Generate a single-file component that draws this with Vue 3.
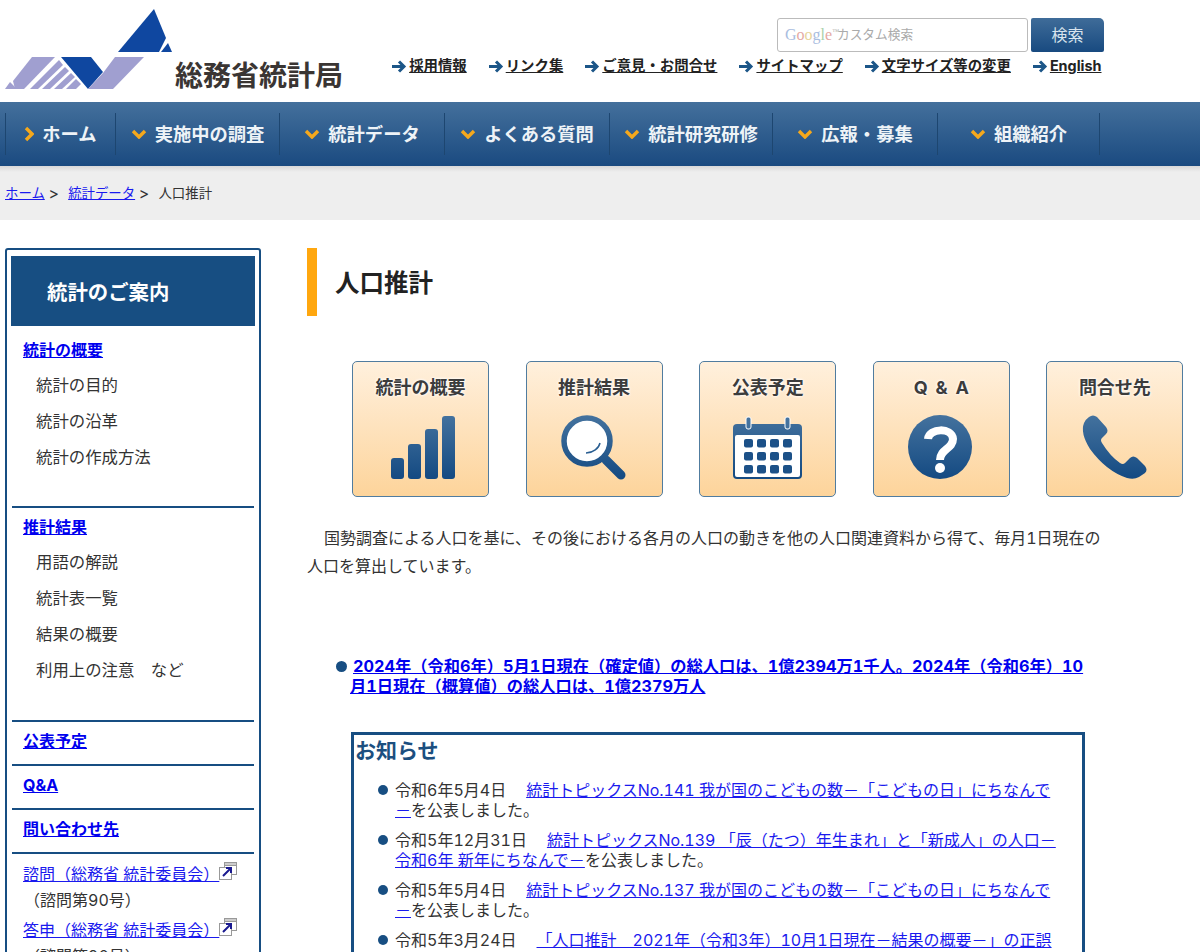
<template>
  <div class="page">
    <header class="head">
      <svg class="logo" viewBox="0 0 175 102" aria-hidden="true">
        <polygon points="154,9 166,38 159,52 118,52" fill="#0f47a0" />
        <polygon points="168,43 172,52 161,52" fill="#0f47a0" />
        <polygon points="61,57 91,57 103,72 88,89" fill="#0f47a0" />
        <polygon points="115,57 144,57 113,89 88,89 103,73" fill="#a09fd0" />
        <polygon points="32,57 55,57 24,89 15,89 13,81" fill="#a09fd0" />
        <polygon points="10,82 17,89 5,89" fill="#a09fd0" />
        <polygon points="59,60 63,65 38,89 30,89" fill="#a09fd0" />
        <polygon points="65,67 69,71 50,89 42,89" fill="#a09fd0" />
        <polygon points="71,73 75,77 62,89 54,89" fill="#a09fd0" />
        <polygon points="76,79 81,84 76,89 66,89" fill="#a09fd0" />
      </svg>
      <div class="bureau">総務省統計局</div>
      <div class="head-right">
        <div class="search">
          <div class="search-box">
            <span class="google"><i class="g1">G</i><i class="g2">o</i><i class="g3">o</i><i class="g1">g</i><i class="g4">l</i><i class="g2">e</i><sup>™</sup></span>
            <span>カスタム検索</span>
          </div>
          <button class="search-btn">検索</button>
        </div>
        <div class="util">
          <a v-for="u in utilLinks" :key="u" class="util-link">
            <svg viewBox="0 0 15 13" width="15" height="13"><path d="M0 6.500h11M7 1.500l5 5-5 5" fill="none" stroke="#1c5688" stroke-width="3" /></svg>
            <span>{{ u }}</span>
          </a>
        </div>
      </div>
    </header>

    <nav class="gnav">
      <div v-for="(n, i) in navItems" :key="n.label" class="gnav-item" :style="{ width: n.w + 'px' }">
        <svg v-if="i === 0" viewBox="0 0 10 16" width="10" height="16"><path d="M2 2l6 6-6 6" fill="none" stroke="#f5a81c" stroke-width="3.400" /></svg>
        <svg v-else viewBox="0 0 16 10" width="16" height="10"><path d="M2 2l6 6 6-6" fill="none" stroke="#f5a81c" stroke-width="3.400" /></svg>
        <span>{{ n.label }}</span>
      </div>
    </nav>

    <div class="crumbs">
      <a class="link">ホーム</a><span class="sep">&gt;</span>
      <a class="link">統計データ</a><span class="sep">&gt;</span>
      <span>人口推計</span>
    </div>

    <div class="body">
      <aside class="side">
        <div class="side-head">統計のご案内</div>
        <section class="side-sec first">
          <a class="side-title">統計の概要</a>
          <ul class="side-list">
            <li>統計の目的</li>
            <li>統計の沿革</li>
            <li>統計の作成方法</li>
          </ul>
        </section>
        <section class="side-sec second">
          <a class="side-title">推計結果</a>
          <ul class="side-list">
            <li>用語の解説</li>
            <li>統計表一覧</li>
            <li>結果の概要</li>
            <li>利用上の注意　など</li>
          </ul>
        </section>
        <section class="side-sec plain"><a class="side-title">公表予定</a></section>
        <section class="side-sec plain"><a class="side-title">Q&amp;A</a></section>
        <section class="side-sec plain"><a class="side-title">問い合わせ先</a></section>
        <section class="side-sec ext">
          <div class="ext-row">
            <a class="link">諮問（総務省 統計委員会）</a>
            <svg class="ext-icon" viewBox="0 0 18 18" width="18" height="18">
              <rect x="5.500" y="0.500" width="12" height="12" fill="#fff" stroke="#999" />
              <rect x="5.500" y="0.500" width="12" height="3" fill="#ccc" stroke="#999" />
              <rect x="0.500" y="5.500" width="12" height="12" fill="#fff" stroke="#999" />
              <path d="M4 14l7-7M7 6h5v5" fill="none" stroke="#1a1a90" stroke-width="2" />
            </svg>
          </div>
          <div class="ext-note">（諮問第90号）</div>
          <div class="ext-row second-row">
            <a class="link">答申（総務省 統計委員会）</a>
            <svg class="ext-icon" viewBox="0 0 18 18" width="18" height="18">
              <rect x="5.500" y="0.500" width="12" height="12" fill="#fff" stroke="#999" />
              <rect x="5.500" y="0.500" width="12" height="3" fill="#ccc" stroke="#999" />
              <rect x="0.500" y="5.500" width="12" height="12" fill="#fff" stroke="#999" />
              <path d="M4 14l7-7M7 6h5v5" fill="none" stroke="#1a1a90" stroke-width="2" />
            </svg>
          </div>
          <div class="ext-note">（諮問第90号）</div>
        </section>
      </aside>

      <main class="main">
        <h1 class="title">人口推計</h1>

        <div class="tiles">
          <div v-for="t in tiles" :key="t.label" class="tile">
            <div class="tile-label">{{ t.label }}</div>
            <svg class="tile-icon" viewBox="0 50 137 86" width="137" height="86" aria-hidden="true">
              <defs>
                <linearGradient :id="'grad-' + t.key" gradientUnits="userSpaceOnUse" x1="0" y1="54" x2="0" y2="118">
                  <stop offset="0" stop-color="#44729e" />
                  <stop offset="1" stop-color="#144a82" />
                </linearGradient>
              </defs>
              <g v-if="t.key === 'bars'" :fill="'url(#grad-' + t.key + ')'">
                <rect x="39" y="97" width="13" height="21" rx="3" />
                <rect x="56" y="83" width="13" height="35" rx="3" />
                <rect x="73" y="68" width="13" height="50" rx="3" />
                <rect x="90" y="55" width="13" height="63" rx="3" />
              </g>
              <g v-else-if="t.key === 'search'">
                <circle cx="62" cy="80" r="23" fill="#fff" :stroke="'url(#grad-' + t.key + ')'" stroke-width="5.500" />
                <path d="M81 99l15 15" :stroke="'url(#grad-' + t.key + ')'" stroke-width="9" stroke-linecap="round" />
                <path d="M75 82c-1 5-7 10-14 10" fill="none" stroke="#2b5f92" stroke-width="1.500" />
              </g>
              <g v-else-if="t.key === 'cal'">
                <rect x="34" y="63" width="69" height="55" rx="4" :fill="'url(#grad-' + t.key + ')'" />
                <rect x="36" y="74" width="65" height="42" rx="2" fill="#fff" />
                <rect x="47" y="56" width="5" height="12" rx="2" fill="#44729e" stroke="#fff" stroke-width="1" />
                <rect x="86" y="56" width="5" height="12" rx="2" fill="#44729e" stroke="#fff" stroke-width="1" />
                <template v-for="y in [78, 91, 104]" :key="y">
                  <rect v-for="x in [45, 58, 71, 84]" :key="x" :x="x" :y="y" width="9" height="8.500" rx="2" fill="#1c5188" />
                </template>
              </g>
              <g v-else-if="t.key === 'help'">
                <circle cx="68" cy="86" r="32" :fill="'url(#grad-' + t.key + ')'" />
                <path d="M56 78c1-11 24-12 25 0 0 10-13 10-13 21" fill="none" stroke="#fff" stroke-width="8" />
                <circle cx="68" cy="107" r="5" fill="#fff" />
              </g>
              <path v-else d="M43 56Q47 53 51 56L60 66Q63 70 60 73L56 77Q54 79 56 82 64 95 74 102 77 104 79 102L84 97Q87 94 91 97L99 105Q102 109 99 112L93 116Q88 119 81 117 60 110 44 88 34 72 38 62 40 58 43 56Z" :fill="'url(#grad-' + t.key + ')'" />
            </svg>
          </div>
        </div>

        <p class="intro">国勢調査による人口を基に、その後における各月の人口の動きを他の人口関連資料から得て、毎月1日現在の人口を算出しています。</p>

        <div class="headline">
          <span class="dot"></span><a class="headline-link">2024年（令和6年）5月1日現在（確定値）の総人口は、1億2394万1千人。2024年（令和6年）10月1日現在（概算値）の総人口は、1億2379万人</a>
        </div>

        <section class="notice">
          <h2 class="notice-title">お知らせ</h2>
          <ul class="notice-list">
            <li v-for="n in notices" :key="n.date + n.link">
              <span class="dot notice-dot"></span>
              <span class="notice-date">{{ n.date }}</span><a class="link">{{ n.link }}</a>{{ n.tail }}
            </li>
          </ul>
        </section>
      </main>
    </div>
  </div>
</template>

<script setup>
const utilLinks = ['採用情報', 'リンク集', 'ご意見・お問合せ', 'サイトマップ', '文字サイズ等の変更', 'English']

const navItems = [
  { label: 'ホーム', w: 110 },
  { label: '実施中の調査', w: 164 },
  { label: '統計データ', w: 165 },
  { label: 'よくある質問', w: 165 },
  { label: '統計研究研修', w: 163 },
  { label: '広報・募集', w: 165 },
  { label: '組織紹介', w: 163 }
]

const tiles = [
  { key: 'bars', label: '統計の概要' },
  { key: 'search', label: '推計結果' },
  { key: 'cal', label: '公表予定' },
  { key: 'help', label: 'Q & A' },
  { key: 'tel', label: '問合せ先' }
]

const notices = [
  { date: '令和6年5月4日', link: '統計トピックスNo.141 我が国のこどもの数－「こどもの日」にちなんで－', tail: 'を公表しました。' },
  { date: '令和5年12月31日', link: '統計トピックスNo.139 「辰（たつ）年生まれ」と「新成人」の人口－令和6年 新年にちなんで－', tail: 'を公表しました。' },
  { date: '令和5年5月4日', link: '統計トピックスNo.137 我が国のこどもの数－「こどもの日」にちなんで－', tail: 'を公表しました。' },
  { date: '令和5年3月24日', link: '「人口推計　2021年（令和3年）10月1日現在－結果の概要－」の正誤表', tail: 'を掲載しました。' }
]
</script>

<style>
html, body {
  margin: 0;
  overflow: hidden;
  background: #fff;
}
</style>

<style scoped>
.page {
  width: 1200px;
  height: 952px;
  overflow: hidden;
  font-family: Inter, "Noto Sans CJK JP", "Liberation Sans", sans-serif;
  font-size: 16px;
  font-variant-numeric: tabular-nums;
  color: #333;
  line-height: 20px;
}

.link {
  color: #1a1aee;
  text-decoration: underline;
}

/* header */
.head {
  display: flex;
  height: 102px;
}

.logo {
  width: 175px;
  height: 102px;
  flex: none;
}

.bureau {
  width: 216px;
  flex: none;
  margin-top: 60px;
  font-size: 28px;
  line-height: 32px;
  font-weight: 700;
  color: #3a3533;
  white-space: nowrap;
}

.head-right {
  width: 713px;
  flex: none;
}

.search {
  display: flex;
  justify-content: flex-end;
  gap: 3px;
  margin-top: 18px;
}

.search-box {
  box-sizing: border-box;
  width: 251px;
  height: 34px;
  padding-left: 7px;
  display: flex;
  align-items: center;
  gap: 7px;
  border: 1px solid #bbb;
  border-radius: 3px;
  font-size: 12.700px;
  color: #aaa;
}

.google {
  font-family: "Liberation Serif", serif;
  font-size: 16px;
  width: 45px;
  white-space: nowrap;
}

.google i { font-style: normal; }
.google sup { font-size: 7px; color: #aaa; line-height: 0; }
.g1 { color: #a9bde0; }
.g2 { color: #e4a9a4; }
.g3 { color: #e8d49a; }
.g4 { color: #a9d0a9; }

.search-btn {
  width: 73px;
  height: 34px;
  padding: 0;
  border: 0;
  border-radius: 2px 5px 2px 2px;
  background: linear-gradient(#3f6c99, #184a80);
  color: #d9e4ee;
  font: inherit;
}

.util {
  display: flex;
  gap: 22px;
  margin: 4px 2.500px 0 0;
  justify-content: flex-end;
}

.util-link {
  display: flex;
  align-items: center;
  gap: 2px;
  font-size: 14.400px;
  font-weight: 700;
  color: #222;
  white-space: nowrap;
}

.util-link span { text-decoration: underline; }

/* global nav */
.gnav {
  display: flex;
  height: 64px;
  padding-left: 5px;
  background: linear-gradient(#44709c, #1a4a80);
}

.gnav-item {
  box-sizing: border-box;
  display: flex;
  align-items: center;
  justify-content: center;
  gap: 8px;
  height: 42px;
  margin-top: 11px;
  border-left: 1px solid #1d4670;
  font-size: 18.300px;
  font-weight: 700;
  color: #eef3f7;
  white-space: nowrap;
}

.gnav-item:last-child {
  border-right: 1px solid #1d4670;
}

/* breadcrumb */
.crumbs {
  height: 54px;
  padding-left: 5px;
  display: flex;
  align-items: center;
  font-size: 13.400px;
  background: linear-gradient(#d8d8d8, #eee 6px);
}

.sep {
  margin: 0 9px 0 4px;
  font-size: 16px;
}

/* main layout */
.body {
  display: flex;
  align-items: flex-start;
  padding: 28px 0 0 5px;
}

.side {
  box-sizing: border-box;
  width: 256px;
  flex: none;
  border: 2px solid #174e82;
  border-radius: 3px;
  padding-top: 6px;
}

.side-head {
  height: 70px;
  margin: 0 4px;
  padding-left: 36px;
  background: #174e82;
  color: #fff;
  font-size: 20.400px;
  font-weight: 700;
  line-height: 74px;
}

.side-sec {
  margin: 0 5px;
  padding: 9px 0 13px 11px;
  border-top: 2px solid #174e82;
}

.side-sec.first {
  border-top: 0;
  padding: 14px 0 31px 11px;
}

.side-sec.second {
  padding: 9px 0 32px 11px;
}

.side-title {
  display: block;
  color: #0000ee;
  font-weight: 700;
  text-decoration: underline;
}

.side-list {
  list-style: none;
  margin: 7px 0 0;
  padding: 0 0 0 13px;
  font-size: 16.400px;
}

.side-list li {
  line-height: 36px;
}

.side-sec.ext {
  padding: 10px 0 20px 11px;
}

.ext-row {
  display: flex;
  align-items: flex-start;
  white-space: nowrap;
}

.second-row {
  margin-top: 10px;
}

.ext-icon {
  margin-top: -2px;
}

.ext-note {
  margin-top: 6px;
  padding-left: 1px;
}

.main {
  width: 795px;
  flex: none;
  margin-left: 46px;
}

.title {
  margin: 0;
  height: 68px;
  border-left: 10px solid #ffa70f;
  padding-left: 18px;
  font-size: 24.500px;
  line-height: 70px;
  font-weight: 700;
  color: #222;
}

.tiles {
  display: flex;
  gap: 36.600px;
  margin: 45px 0 0 45px;
  width: 840px;
}

.tile {
  box-sizing: border-box;
  width: 137px;
  height: 136px;
  flex: none;
  border: 1.500px solid #507c9f;
  border-radius: 5px;
  background: linear-gradient(#fff0dd, #fdd49b);
  overflow: hidden;
}

.tile-label {
  height: 48.500px;
  padding-top: 16px;
  box-sizing: border-box;
  text-align: center;
  font-size: 18px;
  font-weight: 700;
  word-spacing: 3px;
  color: #3c3c3c;
  text-shadow: 0 0 3px #fff, 0 0 3px #fff;
}

.tile-icon {
  display: block;
  margin-left: -1.500px;
}

.intro {
  margin: 27px 0 0;
  line-height: 28px;
  text-indent: 17px;
}

.headline {
  margin: 76px 0 0;
  padding-left: 43px;
  text-indent: -14px;
  width: 735px;
  font-size: 16.250px;
  font-weight: 700;
}

.headline-link {
  color: #0000ee;
  text-decoration: underline;
}

.dot {
  display: inline-block;
  width: 11px;
  height: 11px;
  margin-right: 6px;
  border-radius: 50%;
  background: #174e82;
}

.notice {
  box-sizing: border-box;
  width: 734px;
  margin: 36px 0 0 44px;
  border: 3px solid #174e82;
  padding: 0 22px 20px 1px;
}

.notice-title {
  margin: 0;
  font-size: 21px;
  line-height: 32px;
  font-weight: 700;
  color: #1c4f80;
}

.notice-list {
  list-style: none;
  margin: 13px 0 0;
  padding: 0 0 0 40px;
}

.notice-list li {
  position: relative;
  margin-bottom: 10px;
}

.notice-dot {
  position: absolute;
  left: -17px;
  top: 5px;
  width: 10px;
  height: 10px;
  margin: 0;
}

.notice-date {
  margin-right: 20px;
}
</style>
